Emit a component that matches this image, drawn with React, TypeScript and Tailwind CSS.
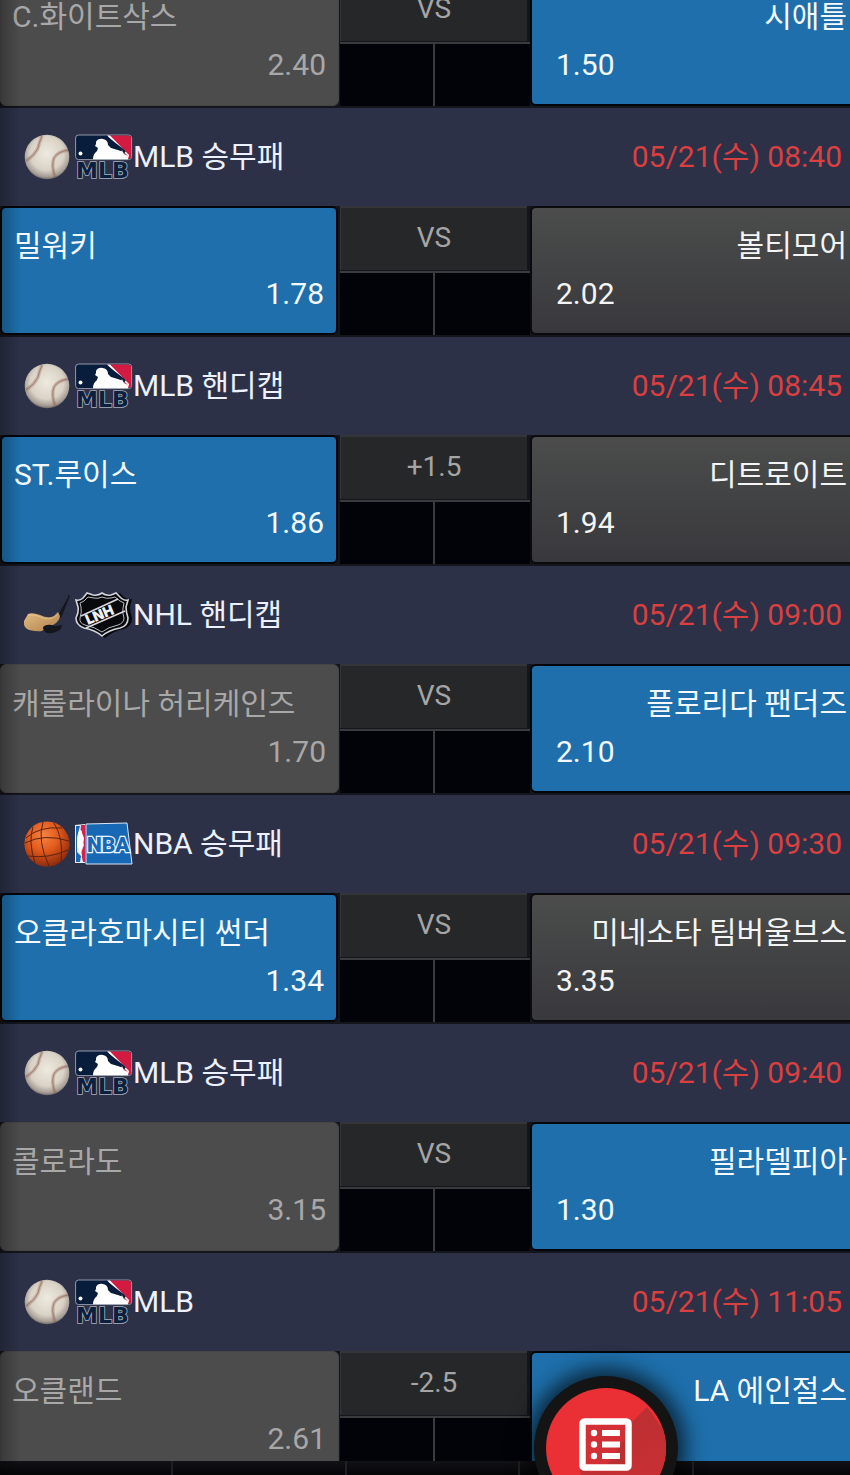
import React from "react";

type Sport = "baseball" | "hockey" | "basketball";
type Pick = "home" | "away";

interface Match {
  id: number;
  sport: Sport;
  title: string;
  time: string;
  home: string;
  homeOdds: string;
  away: string;
  awayOdds: string;
  line: string;
  picked: Pick;
}

const matches: Match[] = [
  { id: 2, sport: "baseball", title: "MLB 승무패", time: "05/21(수) 08:40", home: "밀워키", homeOdds: "1.78", away: "볼티모어", awayOdds: "2.02", line: "VS", picked: "home" },
  { id: 3, sport: "baseball", title: "MLB 핸디캡", time: "05/21(수) 08:45", home: "ST.루이스", homeOdds: "1.86", away: "디트로이트", awayOdds: "1.94", line: "+1.5", picked: "home" },
  { id: 4, sport: "hockey", title: "NHL 핸디캡", time: "05/21(수) 09:00", home: "캐롤라이나 허리케인즈", homeOdds: "1.70", away: "플로리다 팬더즈", awayOdds: "2.10", line: "VS", picked: "away" },
  { id: 5, sport: "basketball", title: "NBA 승무패", time: "05/21(수) 09:30", home: "오클라호마시티 썬더", homeOdds: "1.34", away: "미네소타 팀버울브스", awayOdds: "3.35", line: "VS", picked: "home" },
  { id: 6, sport: "baseball", title: "MLB 승무패", time: "05/21(수) 09:40", home: "콜로라도", homeOdds: "3.15", away: "필라델피아", awayOdds: "1.30", line: "VS", picked: "away" },
  { id: 7, sport: "baseball", title: "MLB", time: "05/21(수) 11:05", home: "오클랜드", homeOdds: "2.61", away: "LA 에인절스", awayOdds: "", line: "-2.5", picked: "away" },
];

const firstMatch: Match = {
  id: 1, sport: "baseball", title: "", time: "", home: "C.화이트삭스", homeOdds: "2.40", away: "시애틀", awayOdds: "1.50", line: "VS", picked: "away",
};

function Gradients() {
  return (
    <svg className="absolute size-0" aria-hidden="true">
      <defs>
        <radialGradient id="ball-white" cx="0.5" cy="0.42" r="0.58">
          <stop offset="0" stopColor="#eeeae0" />
          <stop offset="0.65" stopColor="#d9d2c6" />
          <stop offset="0.9" stopColor="#a69d95" />
          <stop offset="1" stopColor="#6d6766" />
        </radialGradient>
        <radialGradient id="ball-orange" cx="0.42" cy="0.32" r="0.68">
          <stop offset="0" stopColor="#f58442" />
          <stop offset="0.5" stopColor="#e15a1d" />
          <stop offset="1" stopColor="#8f2c0d" />
        </radialGradient>
        <linearGradient id="stick-wood" x1="0" y1="0" x2="1" y2="1">
          <stop offset="0" stopColor="#e2bd86" />
          <stop offset="1" stopColor="#b08047" />
        </linearGradient>
      </defs>
    </svg>
  );
}

function SportIcon({ sport }: { sport: Sport }) {
  if (sport === "baseball") {
    return (
      <svg viewBox="0 0 46 46" className="size-[46px] shrink-0" aria-hidden="true">
        <circle cx="23" cy="23" r="22.3" fill="url(#ball-white)" />
        <g fill="none" stroke="#94695d">
          <path d="M18 2Q15 9 14 14Q11 21 2 27" strokeWidth="3.500" opacity="0.350" />
          <path d="M18 2Q15 9 14 14Q11 21 2 27" strokeWidth="0.900" opacity="0.800" />
          <path d="M44 16Q33 18 30 24Q27 31 31 43" strokeWidth="3.500" opacity="0.350" />
          <path d="M44 16Q33 18 30 24Q27 31 31 43" strokeWidth="0.900" opacity="0.800" />
        </g>
      </svg>
    );
  }
  if (sport === "basketball") {
    return (
      <svg viewBox="0 0 46 46" className="size-[46px] shrink-0" aria-hidden="true">
        <circle cx="23" cy="23" r="22.6" fill="url(#ball-orange)" />
        <g fill="none" stroke="#5c210d" strokeWidth="1">
          <path d="M2 17Q15 5 38 7" />
          <path d="M19 1Q13 20 25 45" />
          <path d="M1 22Q20 12 45 20" />
          <path d="M30 2Q40 18 37 41" />
          <path d="M4 35Q24 38 44 29" />
          <path d="M9 6Q4 20 11 42" />
        </g>
      </svg>
    );
  }
  return (
    <svg viewBox="0 0 46 46" className="size-[46px] shrink-0" aria-hidden="true">
      <path d="M32 24L44 3L46 4L37 26Z" fill="#15171f" />
      <path d="M44 4L34 22" stroke="#4a4c55" strokeWidth="0.700" />
      <path d="M4 22Q8 20 16 23Q24 27 30 24L34 20L36 24Q35 30 29 33L20 37Q19 41 5 38Q-1 36 0 29Z" fill="url(#stick-wood)" />
      <path d="M4 23Q12 22 19 26Q26 29 33 23" fill="none" stroke="#edcf9d" strokeWidth="1" opacity="0.600" />
      <path d="M19 35Q23 31 31 34L38 33L37 37Q31 42 23 41Q19 39 19 35Z" fill="#14161d" />
    </svg>
  );
}

function LeagueLogo({ sport }: { sport: Sport }) {
  if (sport === "baseball") {
    return (
      <svg viewBox="0 0 58 46" className="h-[46px] w-[58px] shrink-0" role="img" aria-label="MLB">
        <rect x="0.600" y="1" width="56" height="24.600" rx="3" fill="#071d3b" stroke="#9299a8" strokeWidth="1" />
        <path d="M34 1.500H53Q56 1.500 56 4V24L53 25Z" fill="#d31b42" />
        <path d="M32 1.500H35L54 21L53 25.200H18Q18 20 22 17L23 14L20 12L21 10L21 8Q23 4 28 5Q33 6 33 11L36 14L43 16Q47 18 49 17L48 15L51 17L49 20L53 22Z" fill="#fff" />
        <path d="M31 1.500L51 17L49 20L47 16L40 15L34 11Q33 5 28 4Z" fill="#071d3b" />
        <circle cx="5.500" cy="19.500" r="2" fill="#fff" />
        <text x="1" y="44" fontSize="22" fontWeight="700" fontFamily="'DejaVu Sans', sans-serif" fill="#0b203d" stroke="#a8b0be" strokeWidth="1.600" paintOrder="stroke">MLB</text>
      </svg>
    );
  }
  if (sport === "basketball") {
    return (
      <svg viewBox="0 0 58 46" className="h-[46px] w-[58px] shrink-0" role="img" aria-label="NBA">
        <path d="M0 4L10 3V42H0Z" fill="#e8edf5" />
        <path d="M1 5H5L2 16V31L6 35L5 41H1Z" fill="#1769b5" />
        <path d="M6 4H10V41H8L6 32L9 24L5 15Z" fill="#d1234b" />
        <path d="M5 9Q7 9 7 12L9 17L8 25L6 28L7 36L5 33L4 27L2 25L4 15Q3 10 5 9Z" fill="#fff" />
        <path d="M11 3L52 2L57 43H11Z" fill="#1769b5" stroke="#d9e6f5" strokeWidth="1" />
        <text x="12" y="31" fontSize="21" fontWeight="900" fontFamily="Roboto, sans-serif" fill="#1769b5" stroke="#eef4fc" strokeWidth="2.400" paintOrder="stroke">NBA</text>
      </svg>
    );
  }
  return (
    <svg viewBox="0 0 58 46" className="h-[46px] w-[58px] shrink-0" role="img" aria-label="LNH">
      <path d="M30 1Q34 4 40 3L45 1L49 5Q53 8 57 7L55 15Q55 20 57 26Q57 34 49 37Q38 39 30 46Q22 40 10 37Q2 34 4 26Q7 20 4 14L3 9Z" fill="#07080c" />
      <path d="M27 1Q31 4 36 3L41 1L46 6Q49 9 53 8L51 15Q51 20 53 26Q53 34 45 36Q34 38 27 44Q20 38 9 36Q1 33 1 26Q4 20 3 15L1 8Q5 9 8 6L12 1L18 3Q23 4 27 1Z" fill="#08090d" stroke="#d2d4d9" strokeWidth="1.600" />
      <path d="M27 5Q31 7 36 6L40 5L45 9L49 11L48 16Q47 20 49 26Q49 31 43 33Q33 35 27 40Q20 35 10 33Q4 31 5 26Q7 20 6 15L5 11L9 9L13 5L19 6Q23 7 27 5Z" fill="none" stroke="#b7bbc3" strokeWidth="1" />
      <path d="M6 24L43 7M11 36L50 19" stroke="#d7d9de" strokeWidth="1.600" />
      <text x="13" y="33" fontSize="14" fontWeight="900" fontFamily="Inter, sans-serif" fill="#f0f1f4" transform="rotate(-23 13 33)">LNH</text>
    </svg>
  );
}

interface TeamProps {
  name: string;
  odds: string;
  side: Pick;
  selected: boolean;
}

function TeamButton({ name, odds, side, selected }: TeamProps) {
  const home = side === "home";
  const skin = selected
    ? "border-2 border-[#03060b] bg-[#1e6fab] text-[#f4f9ff]"
    : home
      ? "border border-[#464646] bg-[#4c4c4d] text-[#a8a8a8]"
      : "border-2 border-[#0b0b0d] bg-linear-to-b from-[#4b4c4b] to-[#39393d] text-[#f4f4f4]";
  const spacing = home
    ? selected
      ? "mr-[2px] pl-3 pr-3"
      : "mr-px pl-[11px] pr-3"
    : "rounded-r-none border-r-0 pl-6 pr-[3px]";
  return (
    <button
      type="button"
      aria-pressed={selected}
      className={`flex min-w-0 flex-col justify-center gap-3 rounded-md pb-[2px] text-[30px] leading-9 ${skin} ${spacing}`}
    >
      <span className={`w-full whitespace-nowrap ${home ? "text-left" : "text-right"}`}>{name}</span>
      <span className={`h-9 w-full ${home ? "text-right" : "text-left"}`}>{odds}</span>
    </button>
  );
}

function OddsRow({ match }: { match: Match }) {
  return (
    <div className="grid h-[131px] grid-cols-[34fr_19fr_32fr] bg-[#14151d] pb-[2px]">
      <TeamButton name={match.home} odds={match.homeOdds} side="home" selected={match.picked === "home"} />
      <div className="flex flex-col">
        <div className="mr-[3px] flex h-16 items-center justify-center border-t-2 border-l border-[#343539] bg-[#262728] pb-[2px] text-[28px] leading-9 text-[#a5a5a5]">
          {match.line}
        </div>
        <div className="mt-px grid flex-1 grid-cols-2 border-t-2 border-[#3b3b3e] bg-[#020209]">
          <div className="border-r-2 border-[#3b3b3e]" />
          <div />
        </div>
      </div>
      <TeamButton name={match.away} odds={match.awayOdds} side="away" selected={match.picked === "away"} />
    </div>
  );
}

function MatchHeader({ match }: { match: Match }) {
  return (
    <header className="flex h-[98px] items-center justify-between bg-[#2c3148] pr-2 pl-6">
      <div className="flex items-center">
        <SportIcon sport={match.sport} />
        <span className="ml-[5px] flex items-center">
          <LeagueLogo sport={match.sport} />
          <h2 className="text-[30px] leading-9 text-[#edf1ff]">{match.title}</h2>
        </span>
      </div>
      <time className="text-[30px] leading-9 text-[#d9403f]">{match.time}</time>
    </header>
  );
}

function SlipButton() {
  return (
    <button
      type="button"
      aria-label="Bet slip"
      className="absolute -top-[85px] left-1/2 flex size-[144px] -translate-x-1/2 items-center justify-center rounded-full bg-[#141414] shadow-[0_0_20px_8px_rgba(0,0,0,0.65)]"
    >
      <svg viewBox="0 0 120 120" className="size-[120px]" aria-hidden="true">
        <defs>
          <linearGradient id="slip-shade" x1="0.3" y1="0" x2="0.9" y2="1">
            <stop offset="0" stopColor="#b92f32" />
            <stop offset="1" stopColor="#cf3034" />
          </linearGradient>
          <clipPath id="slip-circle"><circle cx="60" cy="60" r="60" /></clipPath>
        </defs>
        <circle cx="60" cy="60" r="60" fill="#ea3034" />
        <path d="M84 36L101 19L130 60L100 130L40 130L34 82Z" fill="url(#slip-shade)" clipPath="url(#slip-circle)" />
        <rect x="39" y="36" width="42" height="42" fill="#d23034" />
        <path d="M60 78L81 48V78Z" fill="#b92f32" />
        <rect x="36.500" y="33.500" width="46" height="46" rx="2" fill="none" stroke="#fff" strokeWidth="6.500" />
        <g fill="#fff">
          <circle cx="48" cy="45" r="3.200" />
          <circle cx="48" cy="56.500" r="3.200" />
          <circle cx="48" cy="68" r="3.200" />
          <rect x="56" y="42" width="18" height="6" />
          <rect x="56" y="53.500" width="18" height="6" />
          <rect x="56" y="65" width="18" height="6" />
        </g>
      </svg>
    </button>
  );
}

export default function App() {
  return (
    <div className="relative flex h-screen flex-col overflow-hidden bg-[#08080a] font-['Roboto','Noto_Sans_CJK_KR',sans-serif]">
      <Gradients />
      <main className="min-h-0 flex-1 overflow-y-auto [scrollbar-width:none]">
        <div className="-mt-[23px]">
          <OddsRow match={firstMatch} />
          {matches.map((match) => (
            <section key={match.id}>
              <MatchHeader match={match} />
              <OddsRow match={match} />
            </section>
          ))}
        </div>
      </main>
      <div className="pointer-events-none absolute inset-y-0 left-0 w-5 bg-linear-to-r from-black/25 to-transparent" />
      <nav className="grid h-[14px] w-[102%] shrink-0 grid-cols-5 bg-linear-to-b from-[#121115] to-[#060608]">
        <div className="border-r-2 border-[#202024]" />
        <div className="border-r-2 border-[#202024]" />
        <div className="border-r-2 border-[#202024]" />
        <div className="relative border-r-2 border-[#202024]">
          <SlipButton />
        </div>
        <div />
      </nav>
    </div>
  );
}
